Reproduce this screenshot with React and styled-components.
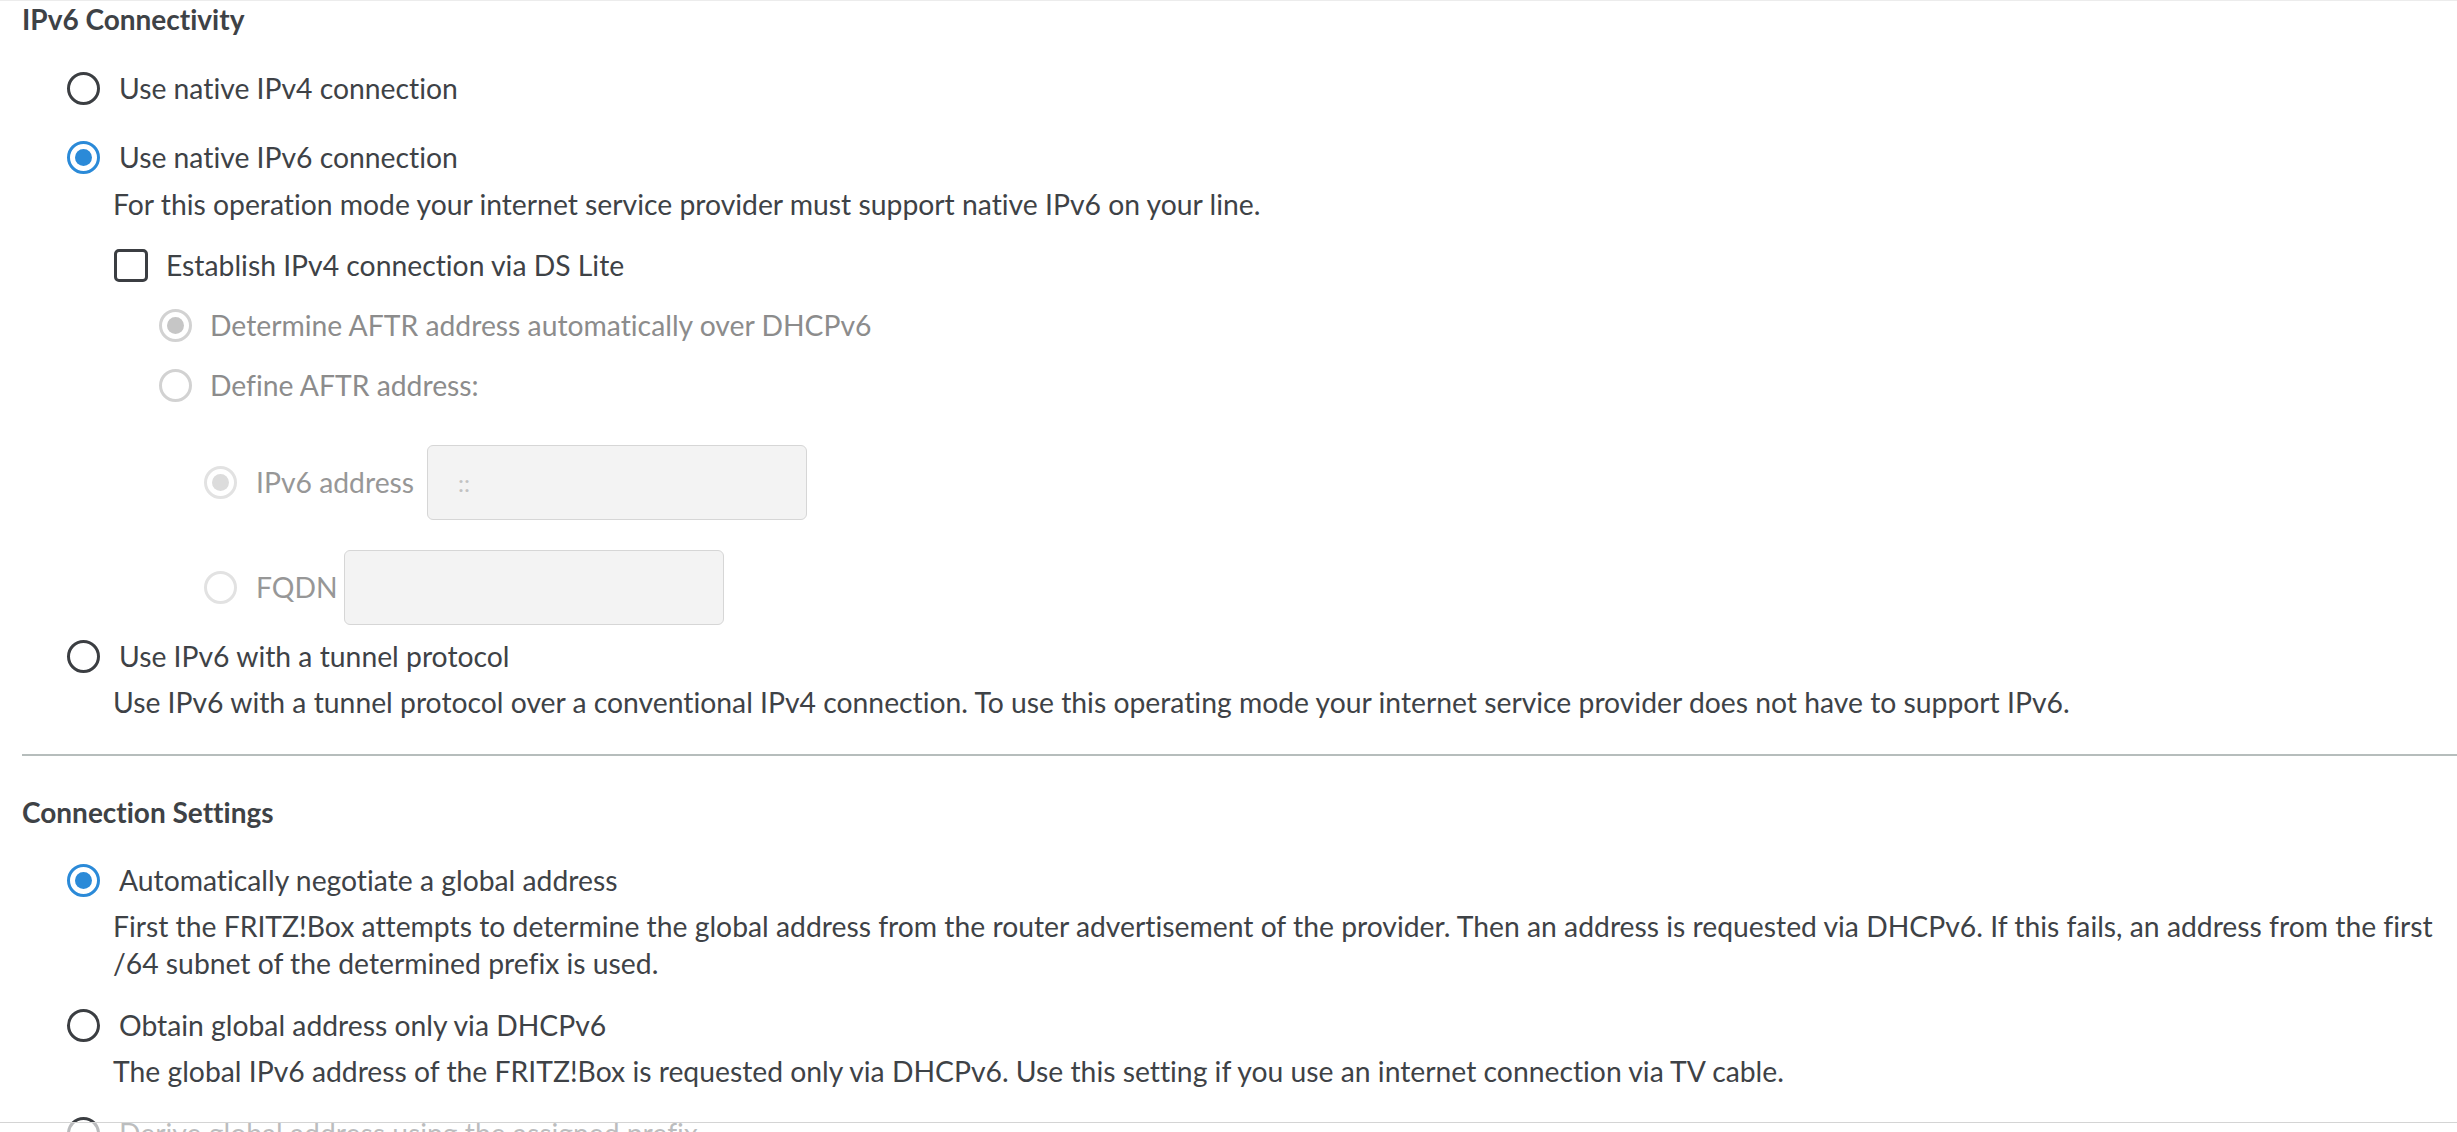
import React from "react";
import styled, { createGlobalStyle, css } from "styled-components";

const Global = createGlobalStyle`
  html, body { margin: 0; padding: 0; background: #ffffff; }
  body {
    font-family: "Lato", "Source Sans Pro", "Liberation Sans", sans-serif;
    font-variant-ligatures: none;
    color: #3e4246;
    overflow: hidden;
  }
`;

const Page = styled.div`
  border-top: 1px solid #ececec;
  padding: 0 0 0 22px;
  box-sizing: border-box;
  width: 2457px;
  height: 1132px;
  overflow: hidden;
`;

const Heading = styled.h2`
  margin: ${(p) => p.$top || 0}px 0 0 0;
  font-size: 28px;
  line-height: 37px;
  font-weight: 700;
  color: #3e4246;
`;

const Divider = styled.hr`
  border: 0;
  height: 2px;
  background: #b6bdbc;
  margin: 33px 0 0 0;
`;

const Row = styled.div`
  display: flex;
  align-items: center;
  min-height: ${(p) => p.$h || 48}px;
  margin-top: ${(p) => p.$top || 0}px;
  margin-left: ${(p) => p.$indent || 45}px;
`;

const toneColors = {
  normal: { ring: "#3b3e42", text: "#3e4246", dot: "#2b8ad8", ringOn: "#2b8ad8" },
  disabled: { ring: "#d2d2d2", text: "#8c8c8c", dot: "#c6c6c6", ringOn: "#d2d2d2" },
  faint: { ring: "#e2e2e2", text: "#979797", dot: "#dcdcdc", ringOn: "#e2e2e2" },
};

const Radio = styled.span`
  flex: none;
  box-sizing: border-box;
  width: 33px;
  height: 33px;
  border-radius: 50%;
  border: 3px solid ${(p) => (p.$checked ? toneColors[p.$tone].ringOn : toneColors[p.$tone].ring)};
  display: flex;
  align-items: center;
  justify-content: center;
  ${(p) =>
    p.$checked &&
    css`
      &::after {
        content: "";
        width: 17px;
        height: 17px;
        border-radius: 50%;
        background: ${toneColors[p.$tone].dot};
      }
    `}
`;

const Checkbox = styled.span`
  flex: none;
  box-sizing: border-box;
  width: 34px;
  height: 33px;
  border: 3px solid #3b3e42;
  border-radius: 5px;
`;

const Label = styled.span`
  margin-left: ${(p) => p.$gap || 19}px;
  font-size: 28.3px;
  line-height: 37px;
  color: ${(p) => toneColors[p.$tone || "normal"].text};
  white-space: nowrap;
`;

const Desc = styled.p`
  margin: ${(p) => p.$top || 5}px 0 0 91px;
  font-size: 28.3px;
  line-height: 37px;
  color: #3e4246;
  white-space: nowrap;
`;

const Field = styled.div`
  box-sizing: border-box;
  width: 380px;
  height: 75px;
  margin-left: ${(p) => p.$gap || 13}px;
  background: #f3f3f3;
  border: 1px solid #d6d6d6;
  border-radius: 6px;
  padding-left: 30px;
  display: flex;
  align-items: center;
  font-size: 24px;
  color: #c2c2c2;
`;

const Footer = styled.div`
  position: fixed;
  left: 0;
  right: 0;
  bottom: 0;
  height: 9px;
  border-top: 1px solid #d4d4d4;
  background: rgba(255, 255, 255, 0.65);
`;

function RadioOption({ checked, tone = "normal", indent, top, gap, children }) {
  return (
    <Row $indent={indent} $top={top}>
      <Radio $checked={checked} $tone={tone} />
      <Label $tone={tone} $gap={gap}>{children}</Label>
    </Row>
  );
}

export default function App() {
  return (
    <>
      <Global />
      <Page>
        <Heading>IPv6 Connectivity</Heading>

        <RadioOption top={26}>Use native IPv4 connection</RadioOption>
        <RadioOption top={21} checked>Use native IPv6 connection</RadioOption>
        <Desc>For this operation mode your internet service provider must support native IPv6 on your line.</Desc>

        <Row $indent={92} $top={18}>
          <Checkbox />
          <Label $gap={18}>Establish IPv4 connection via DS Lite</Label>
        </Row>
        <RadioOption indent={137} top={12} checked tone="disabled" gap={18}>
          Determine AFTR address automatically over DHCPv6
        </RadioOption>
        <RadioOption indent={137} top={12} tone="disabled" gap={18}>
          Define AFTR address:
        </RadioOption>

        <Row $indent={182} $top={36} $h={75}>
          <Radio $checked $tone="faint" />
          <Label $tone="faint" $gap={19}>IPv6 address</Label>
          <Field>::</Field>
        </Row>
        <Row $indent={182} $top={30} $h={75}>
          <Radio $tone="faint" />
          <Label $tone="faint" $gap={19}>FQDN</Label>
          <Field $gap={6} />
        </Row>

        <RadioOption top={7}>Use IPv6 with a tunnel protocol</RadioOption>
        <Desc $top={4}>
          Use IPv6 with a tunnel protocol over a conventional IPv4 connection. To use this operating mode your internet service provider does not have to support IPv6.
        </Desc>

        <Divider />

        <Heading $top={38}>Connection Settings</Heading>

        <RadioOption top={25} checked>Automatically negotiate a global address</RadioOption>
        <Desc $top={4}>
          First the FRITZ!Box attempts to determine the global address from the router advertisement of the provider. Then an address is requested via DHCPv6. If this fails, an address from the first
          <br />
          /64 subnet of the determined prefix is used.
        </Desc>

        <RadioOption top={19}>Obtain global address only via DHCPv6</RadioOption>
        <Desc $top={4}>
          The global IPv6 address of the FRITZ!Box is requested only via DHCPv6. Use this setting if you use an internet connection via TV cable.
        </Desc>

        <RadioOption top={19}>Derive global address using the assigned prefix</RadioOption>
      </Page>
      <Footer />
    </>
  );
}
